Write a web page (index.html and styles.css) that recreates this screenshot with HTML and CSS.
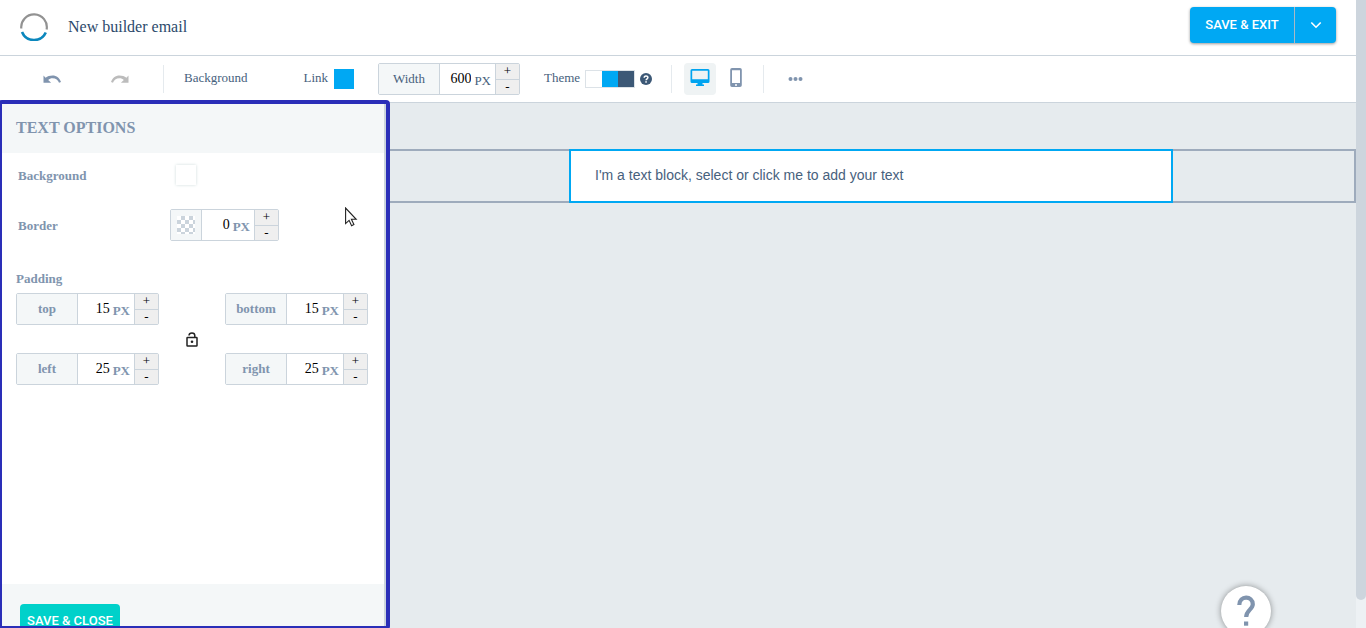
FILE: index.html
```
<!DOCTYPE html>
<html lang="en">
<head>
    <meta charset="UTF-8">
    <meta name="viewport" content="width=device-width, initial-scale=1.0">
    <title>New builder email</title>
    <link rel="stylesheet" href="styles.css">
</head>
<body>
    <div class="app">
        <header class="topbar">
            <svg class="logo" viewBox="0 0 28 28" fill="none" stroke-width="2.2">
                <path d="M1.3 15.5A12.8 12.8 0 1 1 26.6 16.5" stroke="#929292"/>
                <path d="M2 19A13 13 0 0 0 25.8 19.5" stroke="#0b87bd" stroke-width="2.6"/>
            </svg>
            <h1>New builder email</h1>
            <div class="save-group">
                <button class="save-exit">SAVE &amp; EXIT</button>
                <button class="save-more" aria-label="More save options">
                    <svg width="12" height="8" viewBox="0 0 12 8" fill="none" stroke="#fff" stroke-width="1.6"><path d="M1.3 1.5L6 6.2L10.7 1.5"/></svg>
                </button>
            </div>
        </header>

        <nav class="toolbar">
            <div class="history">
                <button class="icon-btn" aria-label="Undo">
                    <svg width="24" height="24" viewBox="0 0 24 24" fill="#8094ae"><path d="M12.5 8.500c-2.650 0-5.050.8-6.900 2.300L3.500 8.500v7.300h7.600l-2.900-2.900c1.200-1 2.600-1.700 4.300-1.700 3.300 0 5.700 1.800 6.500 4.600l2-.7C19.900 11.200 16.500 8.500 12.500 8.500z"/></svg>
                </button>
                <button class="icon-btn" aria-label="Redo">
                    <svg width="24" height="24" viewBox="0 0 24 24" fill="#bcbcbc"><path d="M11.5 8.500c2.650 0 5.050.8 6.900 2.300L20.500 8.500v7.300h-7.600l2.900-2.900c-1.200-1-2.600-1.700-4.300-1.700-3.300 0-5.700 1.800-6.500 4.600l-2-.7C4.100 11.200 7.500 8.500 11.500 8.500z"/></svg>
                </button>
            </div>
            <div class="page-colors">
                <span>Background</span>
                <div class="link-color">
                    <span>Link</span>
                    <button class="color-link" aria-label="Link color"></button>
                </div>
            </div>
            <div class="field width-field">
                <label for="width">Width</label>
                <div class="value"><input type="text" id="width" value="600"><span>PX</span></div>
                <div class="stepper"><button>+</button><button>-</button></div>
            </div>
            <div class="theme">
                <span>Theme</span>
                <button class="theme-colors" aria-label="Theme colors"><i></i><i></i><i></i></button>
                <svg width="12" height="12" viewBox="0 0 12 12"><circle cx="6" cy="6" r="6" fill="#3c5876"/><path d="M4.200 4.700c0-2.300 3.700-2.300 3.700-.1 0 1.200-1.800 1.200-1.800 2.600" fill="none" stroke="#fff" stroke-width="1.500"/><rect x="5.300" y="8.200" width="1.500" height="1.500" fill="#fff"/></svg>
            </div>
            <div class="devices">
                <button class="device active" aria-label="Desktop view">
                    <svg width="20" height="18" viewBox="0 0 20 18"><path d="M2 0h16a1.500 1.500 0 0 1 1.500 1.500v11A1.500 1.500 0 0 1 18 14h-5.500v1.500h1.500V17H6v-1.500h1.500V14H2a1.500 1.500 0 0 1-1.500-1.500v-11A1.500 1.500 0 0 1 2 0zm.2 1.700v8.600h15.600V1.700z" fill="#00a4f0"/></svg>
                </button>
                <button class="device" aria-label="Mobile view">
                    <svg width="12" height="20" viewBox="0 0 12 20"><path d="M2 0h8a1.800 1.800 0 0 1 1.800 1.800v15.400A1.800 1.800 0 0 1 10 19H2a1.800 1.800 0 0 1-1.800-1.800V1.800A1.800 1.800 0 0 1 2 0zm0 2.300v12.700h8V2.300z" fill="#8094ae"/><circle cx="6" cy="17" r="1" fill="#fff"/></svg>
                </button>
            </div>
            <button class="icon-btn more" aria-label="More">
                <svg width="16" height="4" viewBox="0 0 16 4" fill="#8094ae"><circle cx="2.500" cy="2" r="2"/><circle cx="7.500" cy="2" r="2"/><circle cx="12.500" cy="2" r="2"/></svg>
            </button>
        </nav>

        <div class="workspace">
            <aside class="panel">
                <div class="panel-inner">
                    <h2>TEXT OPTIONS</h2>
                    <div class="options">
                        <div class="option-row">
                            <label for="blockBackground">Background</label>
                            <button class="swatch" id="blockBackground"></button>
                        </div>
                        <div class="option-row">
                            <label for="border">Border</label>
                            <div class="field border-field">
                                <button class="checker" aria-label="Border color">
                                    <svg width="18" height="18" viewBox="0 0 18 18">
                                        <defs><pattern id="squares" width="8" height="8" patternUnits="userSpaceOnUse"><path d="M4 0h4v4H4zM0 4h4v4H0z" fill="#cbd4dc"/></pattern></defs>
                                        <rect width="18" height="18" fill="#fff"/>
                                        <rect width="18" height="18" fill="url(#squares)"/>
                                    </svg>
                                </button>
                                <div class="value"><input type="text" id="border" value="0"><span>PX</span></div>
                                <div class="stepper"><button>+</button><button>-</button></div>
                            </div>
                        </div>
                        <h3>Padding</h3>
                        <div class="padding-grid">
                            <div class="field">
                                <label for="padTop">top</label>
                                <div class="value"><input type="text" id="padTop" value="15"><span>PX</span></div>
                                <div class="stepper"><button>+</button><button>-</button></div>
                            </div>
                            <button class="icon-btn lock" aria-label="Lock padding">
                                <svg width="12" height="15" viewBox="0 0 12 15" fill="none" stroke="#222" stroke-width="1.500"><rect x="1" y="5.500" width="10" height="8.500" rx=".6"/><path d="M3 3.500C3.200.2 8.800.2 8.800 3.600v1.900"/><circle cx="6" cy="9.700" r="1.300" fill="#222" stroke="none"/></svg>
                            </button>
                            <div class="field">
                                <label for="padBottom">bottom</label>
                                <div class="value"><input type="text" id="padBottom" value="15"><span>PX</span></div>
                                <div class="stepper"><button>+</button><button>-</button></div>
                            </div>
                            <div class="field">
                                <label for="padLeft">left</label>
                                <div class="value"><input type="text" id="padLeft" value="25"><span>PX</span></div>
                                <div class="stepper"><button>+</button><button>-</button></div>
                            </div>
                            <div class="field">
                                <label for="padRight">right</label>
                                <div class="value"><input type="text" id="padRight" value="25"><span>PX</span></div>
                                <div class="stepper"><button>+</button><button>-</button></div>
                            </div>
                        </div>
                    </div>
                    <div class="panel-footer">
                        <button class="save-close">SAVE &amp; CLOSE</button>
                    </div>
                </div>
            </aside>
            <main class="canvas">
                <section class="email-row">
                    <p class="text-block">I'm a text block, select or click me to add your text</p>
                </section>
            </main>
        </div>
    </div>
    <div class="scrollbar"><div class="thumb"></div></div>

    <button class="help" aria-label="Help">
        <svg width="18" height="32" viewBox="0 0 18 32"><path d="M2.300 10C2.300.3 15.800.3 15.800 9.300c0 5-6.600 6-6.600 12.700" fill="none" stroke="#8094ae" stroke-width="4.200"/><rect x="7" y="26.500" width="4.200" height="4.200" fill="#8094ae"/></svg>
    </button>
    <svg class="cursor" width="13" height="20" viewBox="0 0 13 20"><path d="M.6 1v15.600l3.500-3.300 2.500 5.400 2.300-1.100-2.500-5.300h4.800z" fill="#fff" stroke="#222" stroke-width="1.100"/></svg>
</body>
</html>
```
FILE: styles.css
```
* {
    box-sizing: border-box;
}

body {
    margin: 0;
    height: 100vh;
    display: flex;
    overflow: hidden;
    background-color: #fff;
    color: #47617d;
    font-family: 'Liberation Serif', serif;
    font-size: 13px;
}

h1, h2, h3, p {
    margin: 0;
}

button {
    border: none;
    padding: 0;
    background: none;
    font-family: inherit;
    cursor: pointer;
}

svg {
    display: block;
}

.app {
    flex: 1;
    min-width: 0;
    display: flex;
    flex-direction: column;
}

.topbar {
    flex: none;
    display: flex;
    align-items: center;
    height: 56px;
    padding: 0 20px 2px;
    border-bottom: 1px solid #cbd4dc;
}

.logo {
    width: 28px;
    height: 28px;
}

.topbar h1 {
    margin-left: 20px;
    font-size: 16px;
    font-weight: normal;
    color: #2c4a6b;
}

.save-group {
    display: flex;
    height: 36px;
    margin: 0 0 4px auto;
    border-radius: 4px;
    background-color: #00a8f3;
    box-shadow: 0 1px 3px rgba(0, 0, 0, 0.4);
}

.save-exit {
    width: 104px;
    color: #fff;
    font-family: Roboto, sans-serif;
    font-size: 13px;
    font-weight: 500;
}

.save-more {
    display: flex;
    justify-content: center;
    align-items: center;
    width: 42px;
    border-left: 1px solid #a9b9c5;
}

.toolbar {
    flex: none;
    display: flex;
    align-items: center;
    height: 47px;
    border-bottom: 1px solid #cbd4dc;
}

.icon-btn {
    display: flex;
    justify-content: center;
    align-items: center;
}

.history {
    display: flex;
    gap: 44px;
    width: 164px;
    height: 28px;
    align-items: center;
    padding-left: 40px;
    border-right: 1px solid #e5eaee;
}

.page-colors {
    display: flex;
    justify-content: space-between;
    align-items: center;
    width: 214px;
    padding: 0 24px 0 20px;
}

.page-colors span,
.theme span {
    padding-bottom: 2px;
}

.link-color {
    display: flex;
    align-items: center;
    gap: 6px;
}

.color-link {
    width: 20px;
    height: 20px;
    background-color: #00a8f3;
}

/* label + value + stepper */
.field {
    display: flex;
    width: 143px;
    height: 32px;
    border: 1px solid #cbd4dc;
    border-radius: 2px;
    background-color: #fff;
}

.width-field {
    width: 142px;
}

.field label,
.checker {
    display: flex;
    justify-content: center;
    align-items: center;
    width: 61px;
    border-right: 1px solid #cbd4dc;
    background-color: #f4f7f8;
}

.value {
    flex: 1;
    min-width: 0;
    display: flex;
    align-items: center;
    padding-right: 4px;
}

.value input {
    flex: 1;
    min-width: 0;
    padding: 0 3px 0 0;
    border: none;
    outline: none;
    background: none;
    color: #000;
    font-family: inherit;
    font-size: 14px;
    font-weight: normal;
    text-align: right;
}

.value span {
    padding-top: 3px;
}

.stepper {
    display: flex;
    flex-direction: column;
    width: 24px;
    border-left: 1px solid #cbd4dc;
    background-color: #efefef;
}

.stepper button {
    flex: 1;
    color: #000;
    font-size: 13px;
    line-height: 12px;
}

.stepper button + button {
    border-top: 1px solid #cbd4dc;
}

.theme {
    display: flex;
    align-items: center;
    width: 152px;
    height: 28px;
    gap: 5px;
    padding-left: 24px;
    border-right: 1px solid #e5eaee;
}

.theme-colors {
    display: flex;
    height: 18px;
    border: 1px solid #dce2e7;
}

.theme-colors i {
    width: 16px;
}

.theme-colors i:nth-child(2) {
    background-color: #00a8f3;
}

.theme-colors i:nth-child(3) {
    background-color: #3c5876;
}

.devices {
    display: flex;
    align-items: center;
    gap: 4px;
    width: 92px;
    height: 28px;
    padding-left: 12px;
    border-right: 1px solid #e5eaee;
}

.device {
    display: flex;
    justify-content: center;
    align-items: center;
    width: 32px;
    height: 32px;
    padding-bottom: 2px;
    border-radius: 4px;
}

.device.active {
    background-color: #eff3f4;
}

.more {
    margin-left: 24px;
}

.workspace {
    flex: 1;
    min-height: 0;
    display: flex;
}

.panel {
    position: relative;
    flex: none;
    width: 386px;
    z-index: 1;
    color: #8094ae;
    font-weight: bold;
}

/* frame round the selected panel */
.panel::after {
    content: "";
    position: absolute;
    top: -3px;
    right: -4px;
    bottom: -2px;
    left: -2px;
    border: 4px solid #2a2eb8;
    border-radius: 4px;
    pointer-events: none;
}

.panel-inner {
    display: flex;
    flex-direction: column;
    height: calc(100% + 28px);
    border-right: 2px solid #cbd4dc;
    background-color: #fff;
}

.panel h2 {
    padding: 0 16px;
    line-height: 50px;
    font-size: 16px;
    background-color: #f4f7f8;
}

.options {
    flex: 1;
    padding: 6px 16px;
}

.option-row {
    display: flex;
    align-items: center;
    height: 32px;
    margin-bottom: 18px;
    padding-left: 2px;
}

.option-row > label {
    width: 152px;
    padding-top: 2px;
}

.swatch {
    width: 20px;
    height: 20px;
    margin-left: 6px;
    box-shadow: 0 0 3px #cfdcdc;
}

.border-field {
    width: 109px;
}

.checker {
    width: 31px;
}

.options h3 {
    margin: 30px 0 6px;
    font-size: 13px;
    line-height: 16px;
}

.padding-grid {
    display: grid;
    grid-template-columns: 143px 66px 143px;
    row-gap: 28px;
}

.lock {
    grid-column: 2;
    grid-row: 1 / 3;
}

.padding-grid .field:nth-child(3),
.padding-grid .field:nth-child(5) {
    grid-column: 3;
}

.panel-footer {
    padding: 20px;
    background-color: #f4f7f8;
}

.save-close {
    display: block;
    width: 100px;
    height: 32px;
    border-radius: 4px;
    background-color: #00d1ca;
    color: #fff;
    font-family: Roboto, sans-serif;
    font-size: 13px;
    font-weight: 500;
}

.canvas {
    flex: 1;
    min-width: 0;
    padding-top: 46px;
    background-color: #e6ebee;
}

.email-row {
    display: flex;
    justify-content: center;
    background-color: #e6ebee;
    box-shadow: inset 0 0 0 2px #9eabbc;
}

.text-block {
    width: 604px;
    padding: 14px 24px 16px;
    border: 2px solid #00a8f3;
    background-color: #fff;
    color: #47617d;
    font-family: 'Liberation Sans', sans-serif;
    font-size: 14px;
    line-height: 20px;
}

.scrollbar {
    flex: none;
    width: 10px;
    background-color: #edf1f4;
}

.thumb {
    height: calc(100% - 28px);
    border-radius: 0 0 5px 5px;
    background-color: #cdd5dd;
}

.help {
    position: fixed;
    right: 95px;
    bottom: -8px;
    display: flex;
    justify-content: center;
    align-items: center;
    width: 50px;
    height: 50px;
    border-radius: 50%;
    background-color: #fff;
    box-shadow: 0 0 6px rgba(0, 0, 0, 0.4);
}

.cursor {
    position: absolute;
    top: 207px;
    left: 345px;
    z-index: 2;
}
```
